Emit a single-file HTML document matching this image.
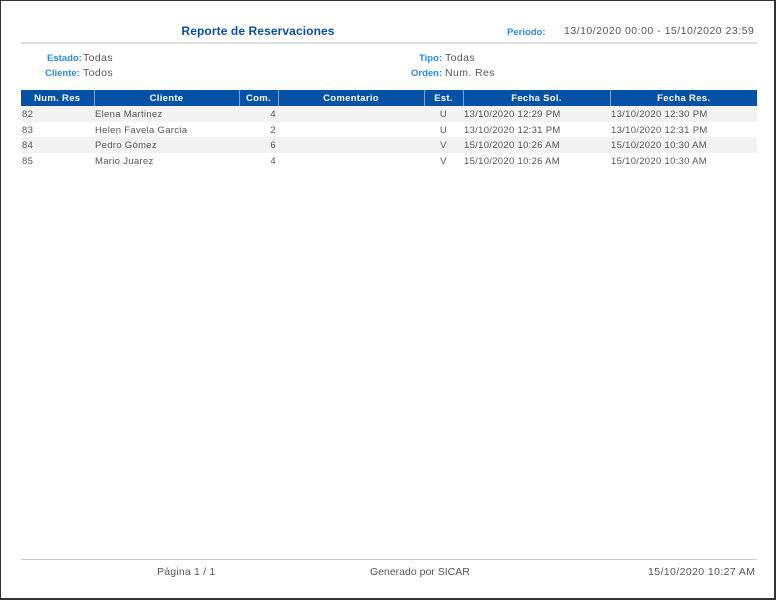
<!DOCTYPE html>
<html><head><meta charset="utf-8"><style>
*{margin:0;padding:0;box-sizing:border-box}
body{width:776px;height:600px;background:#fff;font-family:"Liberation Sans",sans-serif;position:relative;overflow:hidden}
.frame{position:absolute;left:0;top:0;width:776px;height:600px;border:1px solid #333;border-right-width:2px;border-bottom-width:2px}
.a{position:absolute;white-space:nowrap}
.title{left:0;width:516px;text-align:center;top:24px;font-size:12px;font-weight:bold;color:#0b4f9e;letter-spacing:0.1px}
.lbl{color:#2a8af0;font-weight:bold;font-size:9.5px}
.val{color:#555;font-size:10.5px;letter-spacing:0.4px}
.hr{position:absolute;left:21px;height:2px;background:#ddd}
table{position:absolute;left:21px;top:90px;border-collapse:collapse;font-size:9.5px;color:#555;table-layout:fixed;width:736px;letter-spacing:0.3px}
th{background:#0451a5;color:#fff;height:16px;font-weight:bold;text-align:center;border-left:1px solid #7aa3d6;font-size:9.5px}
th:first-child{border-left:none}
td{height:15.5px;padding:2px 1px 0}
tr:nth-child(even) td{background:#f2f2f2}
.r{text-align:right;padding-right:2px}.c{text-align:center}
.foot{top:566px;font-size:10.5px;color:#555;letter-spacing:0.2px}
</style></head><body>
<div class="frame"></div>
<div class="a title">Reporte de Reservaciones</div>
<div class="a lbl" style="left:507px;top:27px">Periodo:</div>
<div class="a val" style="left:564px;top:25px;letter-spacing:0.5px">13/10/2020 00:00 - 15/10/2020 23:59</div>
<div class="hr" style="top:42px;width:736px"></div>
<div class="a lbl" style="left:47px;top:53px">Estado:</div>
<div class="a val" style="left:83px;top:52px">Todas</div>
<div class="a lbl" style="left:45px;top:68px">Cliente:</div>
<div class="a val" style="left:83px;top:67px">Todos</div>
<div class="a lbl" style="left:419px;top:53px">Tipo:</div>
<div class="a val" style="left:445px;top:52px">Todas</div>
<div class="a lbl" style="left:411px;top:68px">Orden:</div>
<div class="a val" style="left:445px;top:67px">Num. Res</div>
<table>
<colgroup><col style="width:73px"><col style="width:145px"><col style="width:39px"><col style="width:146px"><col style="width:39px"><col style="width:147px"><col style="width:147px"></colgroup>
<tr><th>Num. Res</th><th>Cliente</th><th>Com.</th><th>Comentario</th><th>Est.</th><th>Fecha Sol.</th><th>Fecha Res.</th></tr>
<tr><td>82</td><td>Elena Martinez</td><td class="r">4</td><td></td><td class="c">U</td><td>13/10/2020 12:29 PM</td><td>13/10/2020 12:30 PM</td></tr>
<tr><td>83</td><td>Helen Favela Garcia</td><td class="r">2</td><td></td><td class="c">U</td><td>13/10/2020 12:31 PM</td><td>13/10/2020 12:31 PM</td></tr>
<tr><td>84</td><td>Pedro Gómez</td><td class="r">6</td><td></td><td class="c">V</td><td>15/10/2020 10:26 AM</td><td>15/10/2020 10:30 AM</td></tr>
<tr><td>85</td><td>Mario Juarez</td><td class="r">4</td><td></td><td class="c">V</td><td>15/10/2020 10:26 AM</td><td>15/10/2020 10:30 AM</td></tr>
</table>
<div class="hr" style="top:559px;width:736px;height:1px;background:#ccc"></div>
<div class="a foot" style="left:157px">Página 1 / 1</div>
<div class="a foot" style="left:370px;letter-spacing:0">Generado por SICAR</div>
<div class="a foot" style="left:648px;letter-spacing:0.4px">15/10/2020 10:27 AM</div>
</body></html>
